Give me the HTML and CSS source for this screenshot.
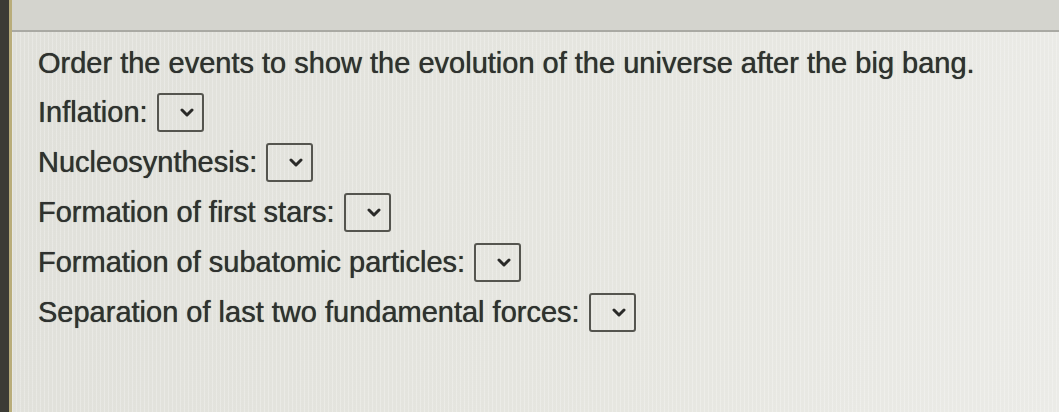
FILE: index.html
```html
<!DOCTYPE html>
<html lang="en">
<head>
    <meta charset="UTF-8">
    <title>Order the events</title>
    <link rel="stylesheet" href="styles.css">
</head>
<body>
    <div class="edge"></div>
    <div class="screen">
        <div class="topbar"></div>
        <div class="question">
            <p class="prompt">Order the events to show the evolution of the universe after the big bang.</p>
            <div class="row">Inflation: <span class="pick"><svg viewBox="0 0 14 9"><path d="M2 2 L7 7 L12 2"/></svg></span></div>
            <div class="row">Nucleosynthesis: <span class="pick"><svg viewBox="0 0 14 9"><path d="M2 2 L7 7 L12 2"/></svg></span></div>
            <div class="row">Formation of first stars: <span class="pick"><svg viewBox="0 0 14 9"><path d="M2 2 L7 7 L12 2"/></svg></span></div>
            <div class="row">Formation of subatomic particles: <span class="pick"><svg viewBox="0 0 14 9"><path d="M2 2 L7 7 L12 2"/></svg></span></div>
            <div class="row">Separation of last two fundamental forces: <span class="pick"><svg viewBox="0 0 14 9"><path d="M2 2 L7 7 L12 2"/></svg></span></div>
        </div>
    </div>
</body>
</html>
```

FILE: styles.css
```css
body {
    margin: 0;
    height: 412px;
    overflow: hidden;
    display: flex;
    font-family: 'Liberation Sans', Arial, sans-serif;
    color: #2f322f;
    background: #e3e3dd;
}
.edge {
    width: 9px;
    background: #3c3b35;
    border-right: 3px solid #b9ad7a;
}
.screen {
    flex: 1;
    display: flex;
    flex-direction: column;
    background:
        repeating-linear-gradient(90deg, rgba(255, 255, 255, 0.25) 0 1px, rgba(0, 0, 0, 0) 1px 4px),
        linear-gradient(100deg, #e0e0da 0%, #e6e6e0 60%, #ebebe7 100%);
}
.topbar {
    height: 30px;
    background: #d4d4ce;
    border-bottom: 2px solid #a9a9a3;
}
.question {
    padding: 14px 0 0 26px;
    text-shadow: 0 0 0.7px #2f322f;
}
.prompt {
    margin: 0 0 12px;
    font-size: 29px;
    line-height: 34px;
}
.row {
    font-size: 29px;
    height: 40px;
    display: flex;
    align-items: center;
    gap: 9px;
}
.row + .row {
    margin-top: 10px;
}
.pick {
    width: 47px;
    height: 39px;
    border: 2px solid #55554f;
    border-radius: 3px;
    display: flex;
    align-items: center;
    justify-content: flex-end;
    padding-right: 8px;
    box-sizing: border-box;
}
.pick svg {
    width: 14px;
    height: 9px;
    fill: none;
    stroke: #2a2a28;
    stroke-width: 3;
    stroke-linecap: round;
    stroke-linejoin: round;
}
```
